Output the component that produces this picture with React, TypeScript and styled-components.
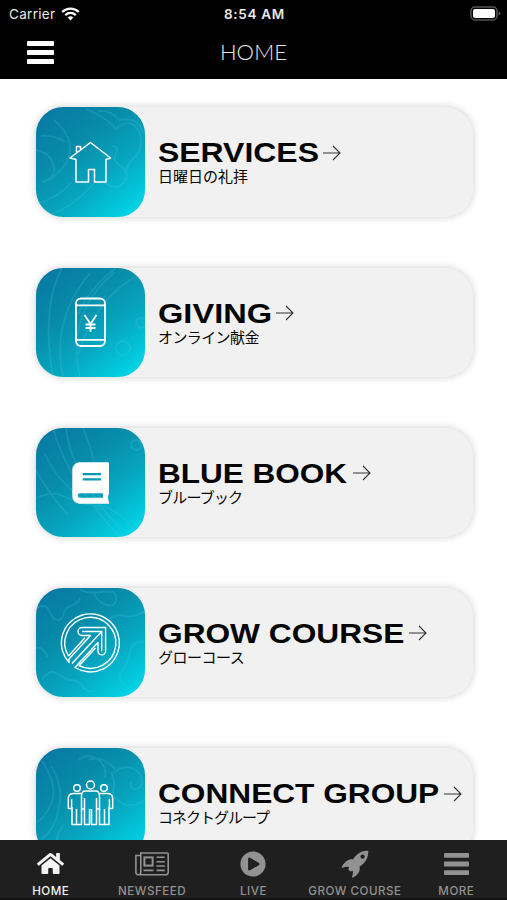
import React from "react";
import styled, { createGlobalStyle } from "styled-components";
import { FaHome, FaPlayCircle } from "react-icons/fa";

const GlobalStyle = createGlobalStyle`
  *, *::before, *::after { box-sizing: border-box; }
  body { margin: 0; background: #fff; overflow: hidden; }
`;

const Screen = styled.div`
  width: 507px;
  height: 900px;
  display: flex;
  flex-direction: column;
  overflow: hidden;
  background: #fff;
  font-family: Inter, "Liberation Sans", "Noto Sans CJK JP", sans-serif;
`;

const Header = styled.header`
  flex: none;
  height: 79px;
  background: #000;
  color: #e9e9e9;
`;

const StatusBar = styled.div`
  height: 27px;
  padding: 0 6px 0 9px;
  display: grid;
  grid-template-columns: 1fr auto 1fr;
  align-items: center;
  font-size: 13.5px;
`;

const Carrier = styled.div`
  display: flex;
  align-items: center;
  gap: 6px;
  letter-spacing: 0.3px;
`;

const Clock = styled.div`
  font-weight: 600;
  letter-spacing: 0.7px;
  transform: translateX(-0.5px);
`;

const Battery = styled.svg`
  justify-self: end;
`;

const TitleBar = styled.div`
  height: 51px;
  display: grid;
  grid-template-columns: 80px 1fr 80px;
  align-items: center;
`;

const MenuButton = styled.button`
  border: 0;
  padding: 0 0 0 27px;
  background: none;
  color: #fff;
  display: flex;
`;

const Title = styled.h1`
  margin: 0 0 1px;
  text-align: center;
  font: 300 22px/24px Lato, sans-serif;
  letter-spacing: 0.1px;
`;

const List = styled.main`
  flex: 1;
  min-height: 0;
  overflow: hidden;
  padding: 28.4px 34px 0 36px;
  display: flex;
  flex-direction: column;
  gap: 51px;
`;

const Card = styled.article`
  flex: none;
  height: 109.2px;
  display: flex;
  border-radius: 28px;
  background: #f1f1f1;
  box-shadow: 0 0 7px 1px rgba(0, 0, 0, 0.16);
`;

const Tile = styled.div`
  flex: none;
  width: 109px;
  height: 109.2px;
  border-radius: 27px;
  overflow: hidden;
  color: #fff;
  background: linear-gradient(142deg, #0878a3 3%, #078ba9 35%, #07a5bf 62%, #00d3e6 92%);
`;

const TileArt = styled.svg`
  display: block;
`;

const CardText = styled.div`
  padding: 30px 0 0 13px;
  color: #050505;
`;

const HeadingRow = styled.div`
  height: 31px;
  display: flex;
  align-items: center;
`;

const HeadingBox = styled.div<{ $width: number }>`
  width: ${(p) => p.$width}px;
`;

const Heading = styled.h2<{ $stretch: number }>`
  margin: 0;
  width: max-content;
  font: 700 28.5px/31px "Liberation Sans", Arial, sans-serif;
  white-space: nowrap;
  transform: scaleX(${(p) => p.$stretch});
  transform-origin: left;
`;

const Subtitle = styled.p<{ $tracking: number }>`
  margin: 0;
  width: max-content;
  font: 400 15px/16px "Noto Sans CJK JP", sans-serif;
  letter-spacing: ${(p) => p.$tracking}px;
  white-space: nowrap;
`;

const TabBar = styled.nav`
  flex: none;
  height: 60px;
  background: #1f1f1f;
  border-bottom: 2px solid #111;
  display: grid;
  grid-template-columns: repeat(5, 1fr);
`;

const Tab = styled.button<{ $active?: boolean }>`
  border: 0;
  padding: 9px 0 0;
  background: none;
  color: ${(p) => (p.$active ? "#f3f3f3" : "#929292")};
  display: flex;
  flex-direction: column;
  align-items: center;
  font: 500 11.6px/14px Inter, sans-serif;
  letter-spacing: 0.5px;
  white-space: nowrap;
`;

const TabIcon = styled.span`
  height: 29px;
  margin-bottom: 6px;
  display: flex;
  align-items: center;
  justify-content: center;
`;

const Bars = ({ width, height }: { width: number; height: number }) => (
  <svg width={width} height={height} viewBox="0 0 27 23" preserveAspectRatio="none" fill="currentColor">
    <rect width="27" height="5" rx="0.8" />
    <rect y="9" width="27" height="5" rx="0.8" />
    <rect y="18" width="27" height="5" rx="0.8" />
  </svg>
);

const Newspaper = () => (
  <svg width="34" height="24" viewBox="0 0 34 24" fill="none" stroke="currentColor" strokeWidth="1.6">
    <path d="M5.8 1h26.4a1 1 0 0 1 1 1v18.5a2.3 2.3 0 0 1-2.3 2.3H3.3a2.4 2.4 0 0 0 2.5-2.3zM5.8 3.5H.9v17a2.4 2.4 0 0 0 2.4 2.3" />
    <rect x="9.4" y="5.4" width="8.2" height="8.2" strokeWidth="2" />
    <path d="M21.5 5.3h8.3M21.5 9.7h8.3M21.5 14h8.3M8.5 18.4h10M21.5 18.4h8.3" />
  </svg>
);

const Rocket = () => (
  <svg width="28" height="28" viewBox="0 0 28 28" fill="currentColor">
    <path
      fillRule="evenodd"
      d="M27.3 .7c-6-.2-11.4 2.3-15.2 8.6-4.5-.4-7.6 1.2-11.3 7.5-.3.8.1 1.2.8.9 2.5-1 4.6-1.2 6.5-.5l-.8 2.2 2.1 2.1 2.3-.7c.6 2 .2 4-.8 5.8-.3.8.2 1.2.9.9 5.8-3.1 7.5-6.6 6.8-11.1 6.5-3.9 8.8-9.5 8.7-15.7zM21.6 4.4a2.2 2.2 0 1 1 0 4.4 2.2 2.2 0 0 1 0-4.4z"
    />
  </svg>
);

const Wifi = () => (
  <svg width="19" height="14" viewBox="0 0 19 14" fill="none" stroke="#fff" strokeWidth="2.3">
    <path d="M1.2 5C6 .4 13 .4 17.8 5" />
    <path d="M4.2 8.1c3.2-2.9 7.4-2.9 10.6 0" />
    <path d="M6.7 10.4c1.7-1.4 3.9-1.4 5.6 0L9.5 13.5z" fill="#fff" stroke="none" />
  </svg>
);

const Arrow = () => (
  <svg width="18" height="16" viewBox="0 0 18 16" fill="none" stroke="#333" strokeWidth="1.1">
    <path d="M0 8h17M10 1l7 7-7 7" />
  </svg>
);

const Tabs = [
  { label: "HOME", icon: <FaHome size={27} />, active: true },
  { label: "NEWSFEED", icon: <Newspaper /> },
  { label: "LIVE", icon: <FaPlayCircle size={26} /> },
  { label: "GROW COURSE", icon: <Rocket /> },
  { label: "MORE", icon: <Bars width={25} height={22} /> },
];

const HouseIcon = () => (
  <path strokeWidth="1.5" d="M34 51L54.5 35.5 74.5 51l-4.5 1.5V75H58.5V62.5h-6V75H40V52.5L34 51zM40.5 46V39.5h4v3.5" />
);

const PhoneIcon = () => (
  <g strokeWidth="1.8">
    <rect x="40" y="30.5" width="29" height="47.5" rx="5" />
    <path d="M40 37.3h29M40 71.8h29" />
    <path d="M48.5 47l6 9 6-9M54.5 56v8M49.5 56.5h10M49.5 60h10" />
  </g>
);

const BookIcon = () => (
  <path
    fill="currentColor"
    fillRule="evenodd"
    stroke="none"
    d="M43.5 34.3H72a1 1 0 0 1 1 1V65.5q-1.8 4 0 8.5v1.7H43.5a7.2 7.2 0 0 1-7.2-7.2v-27a7.2 7.2 0 0 1 7.2-7.2zM46.7 45v2.3H65V45zM46.7 50.2v2.3H65v-2.3zM44 65.2a2.25 2.25 0 0 0 0 4.5H67v-4.5z"
  />
);

const GrowIcon = () => (
  <g strokeWidth="1.4">
    <path d="M33 74.5A29 29 0 1 1 39 79.5L62 54.5V63a3.8 3.8 0 0 0 7.6 0V39.5H46a4 4 0 0 0 0 8h8.5L33 71z" />
    <path d="M32.5 68A25.5 25.5 0 1 1 43 77.7L59.5 60M32.5 68L49 49.8M46 43.5h19.7v19.8" />
    <path d="M36 75.5L65.7 43.5" />
  </g>
);

const PeopleIcon = () => (
  <g strokeWidth="1.5">
    <circle cx="54.5" cy="37" r="4" />
    <circle cx="41" cy="40" r="3.3" />
    <circle cx="68" cy="40" r="3.3" />
    <path d="M49.5 43h10q4 0 4 5v13h-3V50M48.5 50v11h-3V48q0-5 4-5M48.5 50v26.5h5V61M60.5 50v26.5h-5V61" />
    <path d="M45 45.5h-7q-5.7 0-5.7 5v10h3.3V51M36 59v17.5h4.5V61M40.5 76.5h5V61M64 45.5h7q5.7 0 5.7 5v10h-3.3V51M73 59v17.5h-4.5V61M68.5 76.5h-5V61" />
  </g>
);

const cards = [
  {
    title: "SERVICES", subtitle: "日曜日の礼拝", width: 165, stretch: 1.121, tracking: 0, icon: <HouseIcon />,
    pattern: "M5 29q15-1 24 6M18 13q8 6 14 18 6 17-5 29-6 8-14 13M0 43q15 3 18 17 2 12-12 15M50 2q20 8 30 20 14-13 23 2 6 16-5 27-11 9-6 22M63 4q12-1 20 9 20-4 24 14M76 39q7 0 4 7-4 8 5 13 9 7 3 16-7 10-20 0M0 97q20-5 35-21M10 109q25-7 48-33",
  },
  {
    title: "GIVING", subtitle: "オンライン献金", width: 118, stretch: 1.144, tracking: -0.6, icon: <PhoneIcon />,
    pattern: "M26 0Q5 40 17 109M54 5Q15 51 27 109M79 4Q29 45 44 109M104 7Q62 25 42 87M80 0Q52 21 42 47M87 73a7 7 0 1 0 .1 0M105 50a5 5 0 1 0 .1 0",
  },
  {
    title: "BLUE BOOK", subtitle: "ブルーブック", width: 195, stretch: 1.106, tracking: -0.8, icon: <BookIcon />,
    pattern: "M17 0Q32 54 84 109M30 0Q36 49 82 98M47 0Q58 25 62 57M9 26Q25 62 66 82M0 43q17 28 32 44M0 70q17-7 27-2 18 9 40 10 20 6 36 31M100 12a5 5 0 1 0 .1 0",
  },
  {
    title: "GROW COURSE", subtitle: "グローコース", width: 251, stretch: 1.111, tracking: -0.5, icon: <GrowIcon />,
    pattern: "M0 20q10-5 13 2c4 13 14 13 15 2 2-8 15-6 16-14M44 2c18 8 35-6 36 8 1 15-20 5-22-5M74 30c15-8 14 5 35-7M0 60c7-2 8 4 12 9M6 92c12-19 20 2 29 0 14 0 10 16 25 10M108 54c-18-2-12 17-21 28-9 9 2 17 12 24",
  },
  {
    title: "CONNECT GROUP", subtitle: "コネクトグループ", width: 286, stretch: 1.11, tracking: -1, icon: <PeopleIcon />,
    pattern: "M6 13q17 26 9 43-7 16-15 18M15 18q13 20 8 42-3 20-18 32M43 12c10-10 29 1 26 17M52 12q15-5 27 9M78 25c10-12 30-4 28 10-2 10-15 6-11-1M75 24c9 17-5 20 8 29 13 11 26-2 26-2M28 76q-10 14-8 28",
  },
];

export default function App() {
  return (
    <>
      <GlobalStyle />
      <Screen>
        <Header>
          <StatusBar>
            <Carrier>Carrier <Wifi /></Carrier>
            <Clock>8:54 AM</Clock>
            <Battery width="31" height="15" viewBox="0 0 31 15">
              <rect x="1" y="1" width="26" height="13" rx="4" fill="none" stroke="#555" strokeWidth="1.5" />
              <rect x="3" y="3" width="22" height="9" rx="2" fill="#fff" />
              <path d="M28.5 5.5q2 .5 2 2t-2 2z" fill="#555" />
            </Battery>
          </StatusBar>
          <TitleBar>
            <MenuButton aria-label="Menu"><Bars width={27} height={23} /></MenuButton>
            <Title>HOME</Title>
          </TitleBar>
        </Header>
        <List>
          {cards.map((card) => (
            <Card key={card.title}>
              <Tile>
                <TileArt width="109" height="110" viewBox="0 0 109 110" fill="none" stroke="currentColor">
                  <path d={card.pattern} stroke="#55cce0" strokeOpacity="0.2" strokeWidth="1.8" />
                  <g strokeLinejoin="round">{card.icon}</g>
                </TileArt>
              </Tile>
              <CardText>
                <HeadingRow>
                  <HeadingBox $width={card.width}>
                    <Heading $stretch={card.stretch}>{card.title}</Heading>
                  </HeadingBox>
                  <Arrow />
                </HeadingRow>
                <Subtitle $tracking={card.tracking}>{card.subtitle}</Subtitle>
              </CardText>
            </Card>
          ))}
        </List>
        <TabBar>
          {Tabs.map((tab) => (
            <Tab key={tab.label} $active={tab.active}>
              <TabIcon>{tab.icon}</TabIcon>
              {tab.label}
            </Tab>
          ))}
        </TabBar>
      </Screen>
    </>
  );
}
